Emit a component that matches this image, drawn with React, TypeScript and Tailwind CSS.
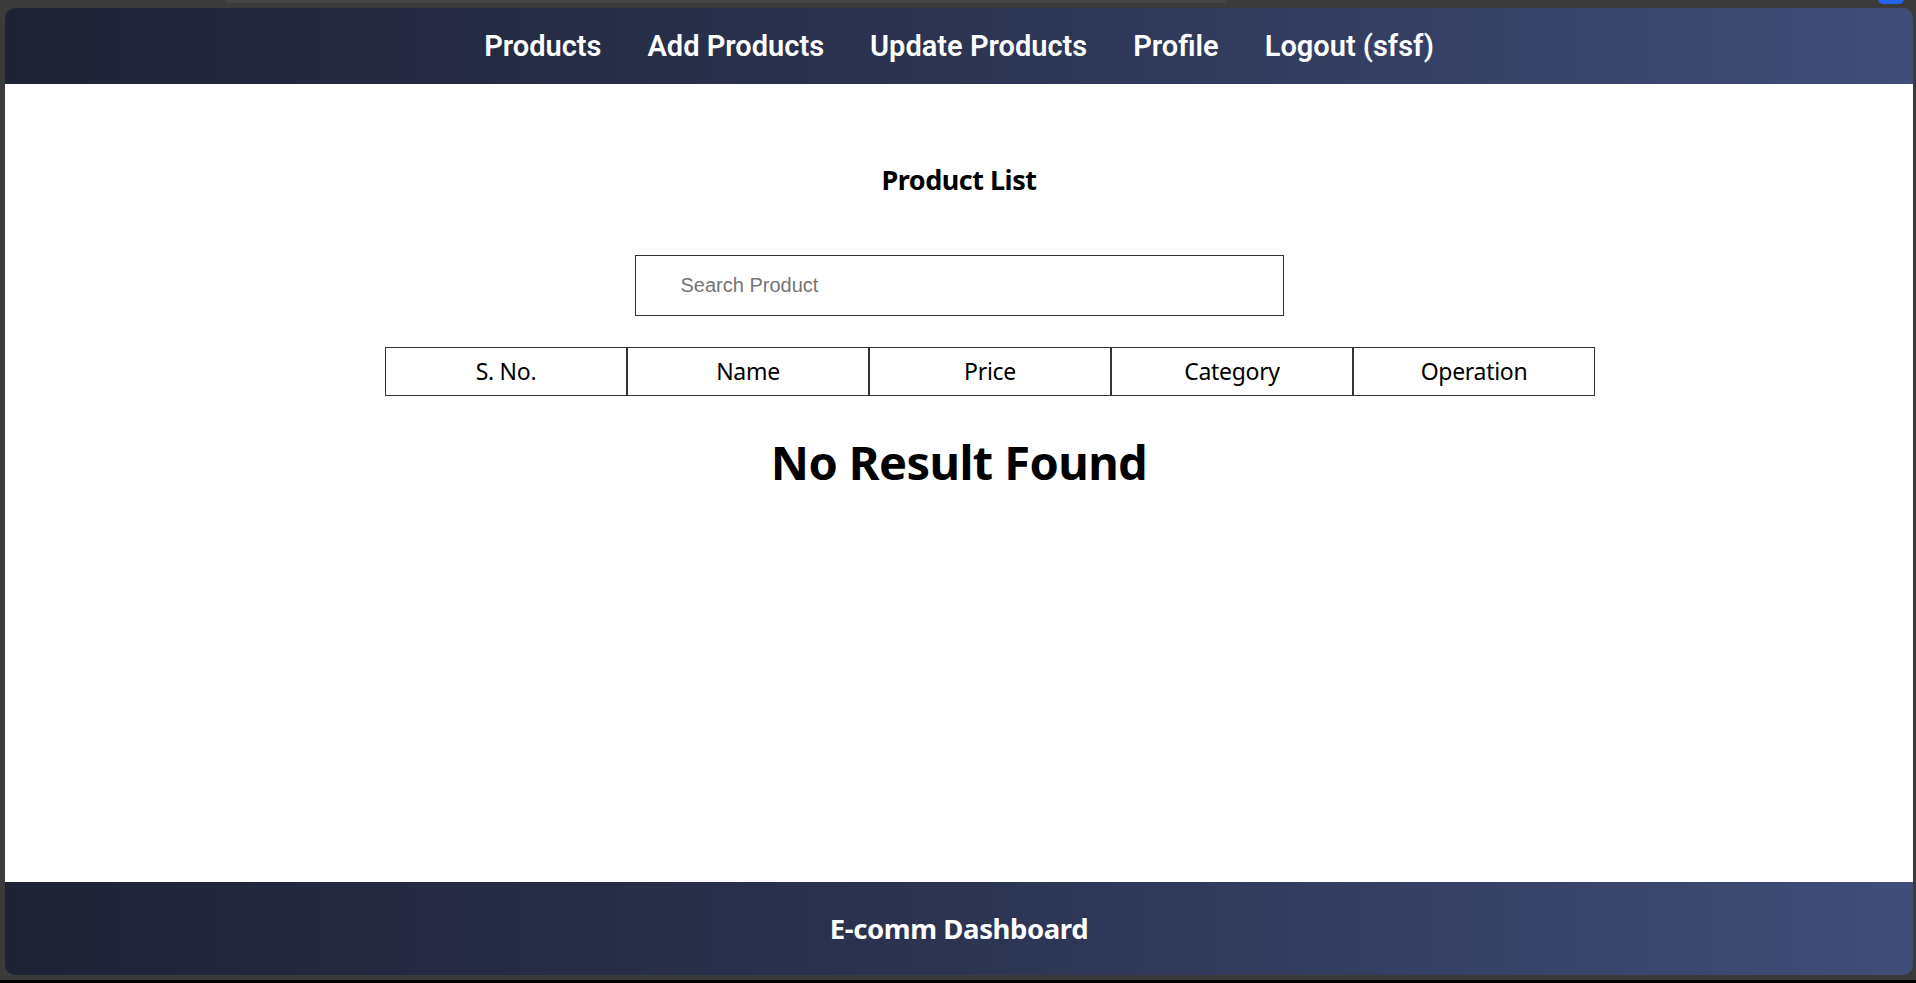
import React from "react";

const navLinks = ["Products", "Add Products", "Update Products", "Profile", "Logout (sfsf)"];
const columns = ["S. No.", "Name", "Price", "Category", "Operation"];

export default function App() {
  return (
    <div className="h-[983px] w-full bg-[#3b3b3b] flex flex-col overflow-hidden">
      {/* window chrome strip */}
      <div className="h-[8px] relative shrink-0">
        <div className="absolute left-[226px] top-0 w-[1000px] h-[3px] bg-[#454545] rounded-b" />
        <div className="absolute right-[12px] -top-[6px] w-[26px] h-[10px] rounded-full bg-[#2563eb]" />
      </div>

      <div className="flex-1 flex flex-col ml-[5px] mr-[3px] rounded-[10px] overflow-hidden">
        <header className="h-[76px] shrink-0 bg-linear-to-r from-[#1e2235] via-[#2c3452] to-[#3f4d78] flex items-center justify-center">
          <nav className="flex items-center gap-[46px] text-white text-[29px] font-semibold font-['Roboto',sans-serif]">
            {navLinks.map((l) => (
              <a key={l} href="#" className="leading-none">
                {l}
              </a>
            ))}
          </nav>
        </header>

        <main className="flex-1 bg-white flex flex-col items-center font-['Noto_Sans','Open_Sans',sans-serif] text-black">
          <h3 className="mt-[82px] text-[27px] font-bold leading-none tracking-[-0.5px]">Product List</h3>

          <input
            type="text"
            placeholder="Search Product"
            className="mt-[62px] w-[649px] h-[61px] border border-[#333] pl-[45px] text-[20px] font-['Liberation_Sans',Arial,sans-serif] placeholder:text-[#757575] outline-none"
          />

          <ul className="mt-[31px] pl-[62px] flex">
            {columns.map((c) => (
              <li
                key={c}
                className="w-[242px] h-[49px] border border-[#333] flex items-center justify-center text-[23px] tracking-[-0.3px]"
              >
                {c}
              </li>
            ))}
          </ul>

          <h1 className="mt-[43px] text-[47px] font-bold leading-none tracking-[-0.6px]">No Result Found</h1>
        </main>

        <footer className="h-[93px] shrink-0 bg-linear-to-r from-[#1e2235] via-[#2c3452] to-[#3f4d78] flex items-center justify-center">
          <h3 className="text-white text-[27.5px] font-bold font-['Noto_Sans','Open_Sans',sans-serif] tracking-[-0.4px]">
            E-comm Dashboard
          </h3>
        </footer>
      </div>
      <div className="h-[5px] shrink-0" />
      <div className="h-[3px] shrink-0 bg-black" />
    </div>
  );
}
